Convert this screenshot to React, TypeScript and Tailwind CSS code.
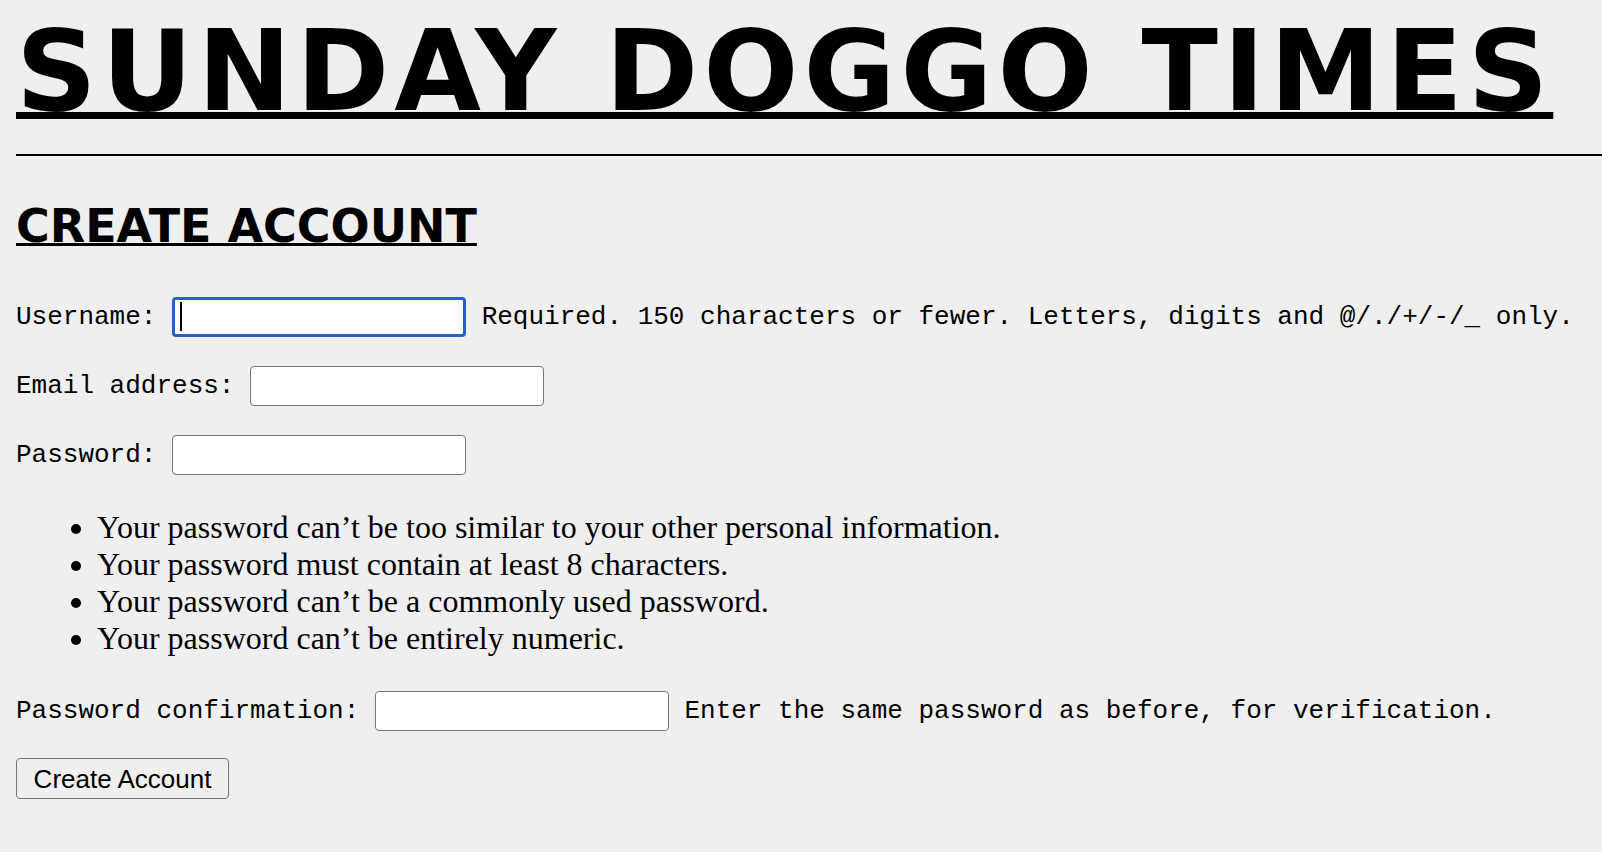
const HINTS = [
  "Your password can’t be too similar to your other personal information.",
  "Your password must contain at least 8 characters.",
  "Your password can’t be a commonly used password.",
  "Your password can’t be entirely numeric.",
];

function TextInput({ focused = false }: { focused?: boolean }) {
  return (
    <span className="relative inline-flex align-middle">
      <input
        type="text"
        className={
          focused
            ? "h-[40px] w-[294px] rounded-[4px] border-[3px] border-[#2362c8] bg-white outline-none"
            : "h-[40px] w-[294px] rounded-[4px] border border-[#767676] bg-white outline-none"
        }
      />
      {focused && <span className="absolute left-[8px] top-[5px] h-[29px] w-[2px] bg-black" />}
    </span>
  );
}

export default function App() {
  return (
    <div className="min-h-screen overflow-hidden bg-[#efefef] pl-4 text-black">
      {/* Masthead */}
      <h1
        className="pt-[11px] text-[112px] font-bold leading-[120px] tracking-[5px] whitespace-nowrap underline decoration-[7px] underline-offset-[2px]"
        style={{ fontFamily: "'DejaVu Sans', Inter, sans-serif" }}
      >
        SUNDAY DOGGO TIMES
      </h1>
      <hr className="mt-[23px] border-t-2 border-black" />

      <h2
        className="mt-[46px] text-[46px] font-bold leading-[48px] underline decoration-[3px] underline-offset-[1px]"
        style={{ fontFamily: "'DejaVu Sans', Inter, sans-serif" }}
      >
        CREATE ACCOUNT
      </h2>

      <form className="mt-[47px] text-[26px]" style={{ fontFamily: "'Liberation Mono', 'Courier New', monospace" }}>
        <p className="flex items-center whitespace-pre leading-[40px]">
          Username: <TextInput focused /> Required. 150 characters or fewer. Letters, digits and @/./+/-/_ only.
        </p>
        <p className="mt-[29px] flex items-center whitespace-pre leading-[40px]">
          Email address: <TextInput />
        </p>
        <p className="mt-[29px] flex items-center whitespace-pre leading-[40px]">
          Password: <TextInput />
        </p>
        <ul
          className="mt-[34px] list-disc pl-[81px] text-[32px] leading-[37px]"
          style={{ fontFamily: "'Liberation Serif', 'Times New Roman', serif" }}
        >
          {HINTS.map((h) => (
            <li key={h}>{h}</li>
          ))}
        </ul>
        <p className="mt-[34px] flex items-center whitespace-pre leading-[40px]">
          Password confirmation: <TextInput /> Enter the same password as before, for verification.
        </p>
        <button
          type="button"
          className="mt-[27px] h-[41px] w-[213px] rounded-[4px] border border-[#767676] bg-[#efefef] text-[26px] leading-none"
          style={{ fontFamily: "'Liberation Sans', Arial, sans-serif" }}
        >
          Create Account
        </button>
      </form>
    </div>
  );
}
